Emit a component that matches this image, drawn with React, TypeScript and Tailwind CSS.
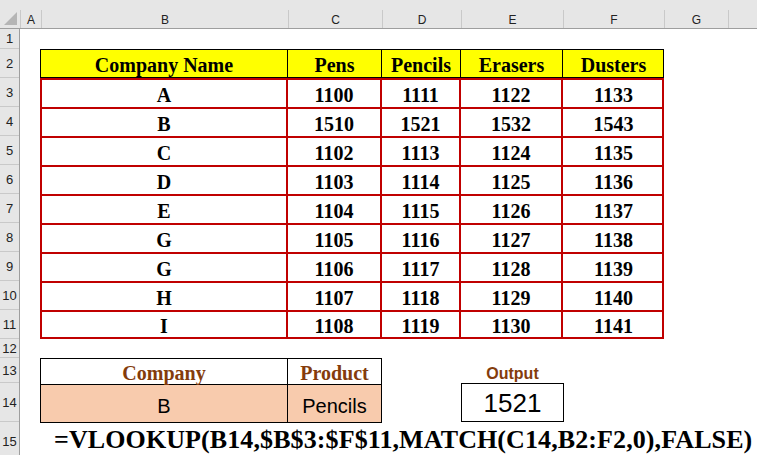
// Excel sheet: VLOOKUP + MATCH two-way lookup example
const SERIF = 'font-["Liberation_Serif","Times_New_Roman",serif]';

const COLS = [
  { key: 'A', w: 'w-[21px]' },
  { key: 'B', w: 'w-[247px]' },
  { key: 'C', w: 'w-[94px]' },
  { key: 'D', w: 'w-[79px]' },
  { key: 'E', w: 'w-[102px]' },
  { key: 'F', w: 'w-[101px]' },
  { key: 'G', w: 'w-[64px]' },
];

const ROW_HEIGHTS: [string, string][] = [
  ['1', 'h-[20px]'],
  ['2', 'h-[29px]'],
  ['3', 'h-[29px]'],
  ['4', 'h-[29px]'],
  ['5', 'h-[29px]'],
  ['6', 'h-[29px]'],
  ['7', 'h-[29px]'],
  ['8', 'h-[29px]'],
  ['9', 'h-[29px]'],
  ['10', 'h-[29px]'],
  ['11', 'h-[29px]'],
  ['12', 'h-[19px]'],
  ['13', 'h-[25px]'],
  ['14', 'h-[39px]'],
  ['15', 'h-[40px]'],
];

const DATA = [
  ['A', 1100, 1111, 1122, 1133],
  ['B', 1510, 1521, 1532, 1543],
  ['C', 1102, 1113, 1124, 1135],
  ['D', 1103, 1114, 1125, 1136],
  ['E', 1104, 1115, 1126, 1137],
  ['G', 1105, 1116, 1127, 1138],
  ['G', 1106, 1117, 1128, 1139],
  ['H', 1107, 1118, 1129, 1140],
  ['I', 1108, 1119, 1130, 1141],
];

const WIDTHS = ['w-[247px]', 'w-[94px]', 'w-[79px]', 'w-[102px]', 'w-[101px]'];
const HEADERS = ['Company Name', 'Pens', 'Pencils', 'Erasers', 'Dusters'];

function ColumnHeaders() {
  return (
    <div className="flex h-[29px] bg-[#e6e6e6] border-b border-[#9e9e9e]">
      <div className="w-[20px] shrink-0 relative pt-[10px]">
        <div className="absolute right-[3px] bottom-[3px] w-0 h-0 border-l-[13px] border-l-transparent border-b-[13px] border-b-[#b5b5b5]" />
      </div>
      {COLS.map((c) => (
        <div
          key={c.key}
          className={`${c.w} shrink-0 mt-[10px] border-l border-[#c9c9c9] flex items-center justify-center pt-[1px] text-[12px] text-[#222] font-["Liberation_Sans",Arial,sans-serif]`}
        >
          {c.key}
        </div>
      ))}
      <div className="flex-1 mt-[10px] border-l border-[#c9c9c9]" />
    </div>
  );
}

function RowHeaders() {
  return (
    <div className="w-[20px] shrink-0 bg-[#e6e6e6] border-r border-[#9e9e9e] flex flex-col">
      {ROW_HEIGHTS.map(([n, h]) => (
        <div
          key={n}
          className={`${h} shrink-0 border-b border-[#c9c9c9] flex items-center justify-center pt-[1px] text-[13px] text-[#222] font-["Liberation_Sans",Arial,sans-serif]`}
        >
          {n}
        </div>
      ))}
    </div>
  );
}

export default function App() {
  return (
    <div className="w-[757px] h-[455px] overflow-hidden bg-white">
      <ColumnHeaders />
      <div className="flex">
        <RowHeaders />
        <div className="flex-1 flex flex-col">
          <div className="h-[20px]" />

          {/* header row */}
          <div className={`ml-[20px] flex h-[29px] w-[624px] bg-[#ffff00] border border-black ${SERIF} font-bold text-[20px] text-black`}>
            {HEADERS.map((h, i) => (
              <div
                key={h}
                className={`${WIDTHS[i]} shrink-0 flex items-center justify-center pt-[2px] ${i < 4 ? 'border-r border-black' : ''}`}
              >
                {h}
              </div>
            ))}
          </div>

          {/* data rows */}
          <div className={`ml-[20px] w-[624px] border-x-2 border-b-2 border-[#c00000] ${SERIF} font-bold text-[20px] text-black`}>
            {DATA.map((row, r) => (
              <div key={r} className={`flex border-t-2 border-[#c00000] ${r === 8 ? 'h-[27px]' : 'h-[29px]'}`}>
                {row.map((v, i) => (
                  <div
                    key={i}
                    className={`${i === 0 ? 'w-[246px]' : WIDTHS[i]} shrink-0 flex items-center justify-center pt-[2px] ${i < 4 ? 'border-r-2 border-[#c00000]' : ''}`}
                  >
                    {v}
                  </div>
                ))}
              </div>
            ))}
          </div>

          <div className="h-[19px]" />

          {/* lookup inputs + output */}
          <div className="flex">
            <div className="ml-[20px] w-[342px] shrink-0 border border-black">
              <div className={`flex h-[25px] ${SERIF} font-bold text-[20px] text-[#843c0c]`}>
                <div className="w-[247px] shrink-0 border-r border-black flex items-center justify-center pt-[3px]">Company</div>
                <div className="flex-1 flex items-center justify-center pt-[3px]">Product</div>
              </div>
              <div className='flex h-[38px] bg-[#f8cbad] border-t border-black text-[20px] text-black font-["Liberation_Sans",Arial,sans-serif]'>
                <div className="w-[247px] shrink-0 border-r border-black flex items-center justify-center pt-[5px]">B</div>
                <div className="flex-1 flex items-center justify-center pt-[5px]">Pencils</div>
              </div>
            </div>
            <div className="ml-[79px] w-[103px] shrink-0 flex flex-col">
              <div className='h-[25px] flex items-end justify-center leading-[18px] text-[16px] font-bold text-[#843c0c] font-["Liberation_Sans",Arial,sans-serif]'>
                Output
              </div>
              <div className='h-[39px] border border-black flex items-center justify-center pt-[2px] text-[26px] text-black font-["Liberation_Sans",Arial,sans-serif]'>
                1521
              </div>
            </div>
          </div>

          {/* formula */}
          <div className={`ml-[34px] h-[33px] flex items-center whitespace-nowrap ${SERIF} font-bold text-[26px] tracking-[0.1px] text-black`}>
            =VLOOKUP(B14,$B$3:$F$11,MATCH(C14,B2:F2,0),FALSE)
          </div>
        </div>
      </div>
    </div>
  );
}
